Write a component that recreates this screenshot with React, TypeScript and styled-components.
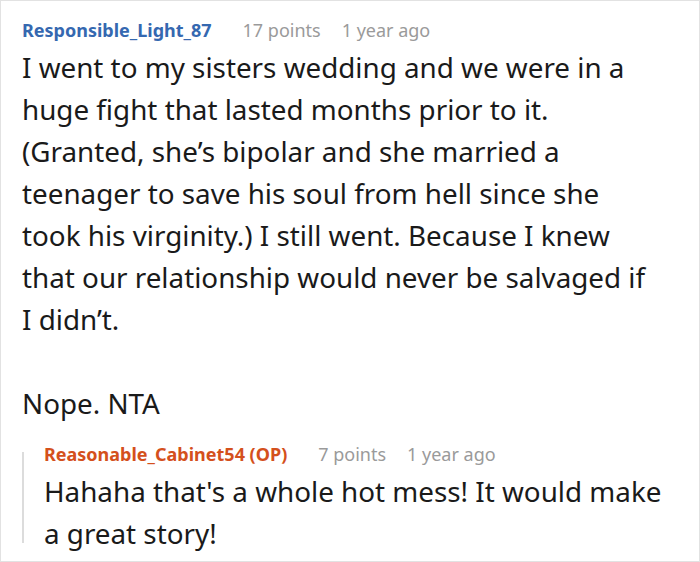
import React from 'react';
import styled, { createGlobalStyle } from 'styled-components';

const GlobalStyle = createGlobalStyle`
  html, body {
    margin: 0;
    padding: 0;
    background: #ffffff;
  }
  body {
    font-family: "Noto Sans", "Open Sans", sans-serif;
    color: #1a1a1a;
  }
`;

const Frame = styled.div`
  width: 700px;
  height: 562px;
  box-sizing: border-box;
  border: 1px solid #e2e2e2;
  padding: 17px 22px 0 21px;
  overflow: hidden;
`;

const Header = styled.div`
  display: flex;
  align-items: baseline;
  height: 24px;
  line-height: 24px;
  font-size: 18px;
`;

const Author = styled.span<{ $op?: boolean }>`
  font-weight: 700;
  color: ${p => (p.$op ? '#d4501c' : '#3568b0')};
  margin-right: 31px;
`;

const Meta = styled.span`
  color: #9a9a9a;
  margin-right: 21px;
`;

const Body = styled.div`
  margin-top: 4px;
  font-size: 27.8px;
  line-height: 42px;
  max-width: 630px;

  p {
    margin: 0;
  }
  p + p {
    margin-top: 42px;
  }
`;

const Reply = styled.div`
  display: flex;
  margin-top: 18px;
`;

const Bar = styled.div`
  width: 2px;
  flex: none;
  margin: 10px 0 11px 0;
  background: #dcdcdc;
`;

const ReplyContent = styled.div`
  flex: 1;
  padding-left: 20px;
`;

type CommentProps = {
  author: string;
  op?: boolean;
  points: string;
  time: string;
};

function CommentHeader({ author, op, points, time }: CommentProps) {
  return (
    <Header>
      <Author $op={op}>{author}</Author>
      <Meta>{points}</Meta>
      <Meta>{time}</Meta>
    </Header>
  );
}

export default function App() {
  return (
    <>
      <GlobalStyle />
      <Frame>
        <CommentHeader author="Responsible_Light_87" points="17 points" time="1 year ago" />
        <Body>
          <p>
            I went to my sisters wedding and we were in a huge fight that lasted months prior to it.
            (Granted, she’s bipolar and she married a teenager to save his soul from hell since she
            took his virginity.) I still went. Because I knew that our relationship would never be
            salvaged if I didn’t.
          </p>
          <p>Nope. NTA</p>
        </Body>
        <Reply>
          <Bar />
          <ReplyContent>
            <CommentHeader author="Reasonable_Cabinet54 (OP)" op points="7 points" time="1 year ago" />
            <Body>Hahaha that's a whole hot mess! It would make a great story!</Body>
          </ReplyContent>
        </Reply>
      </Frame>
    </>
  );
}
